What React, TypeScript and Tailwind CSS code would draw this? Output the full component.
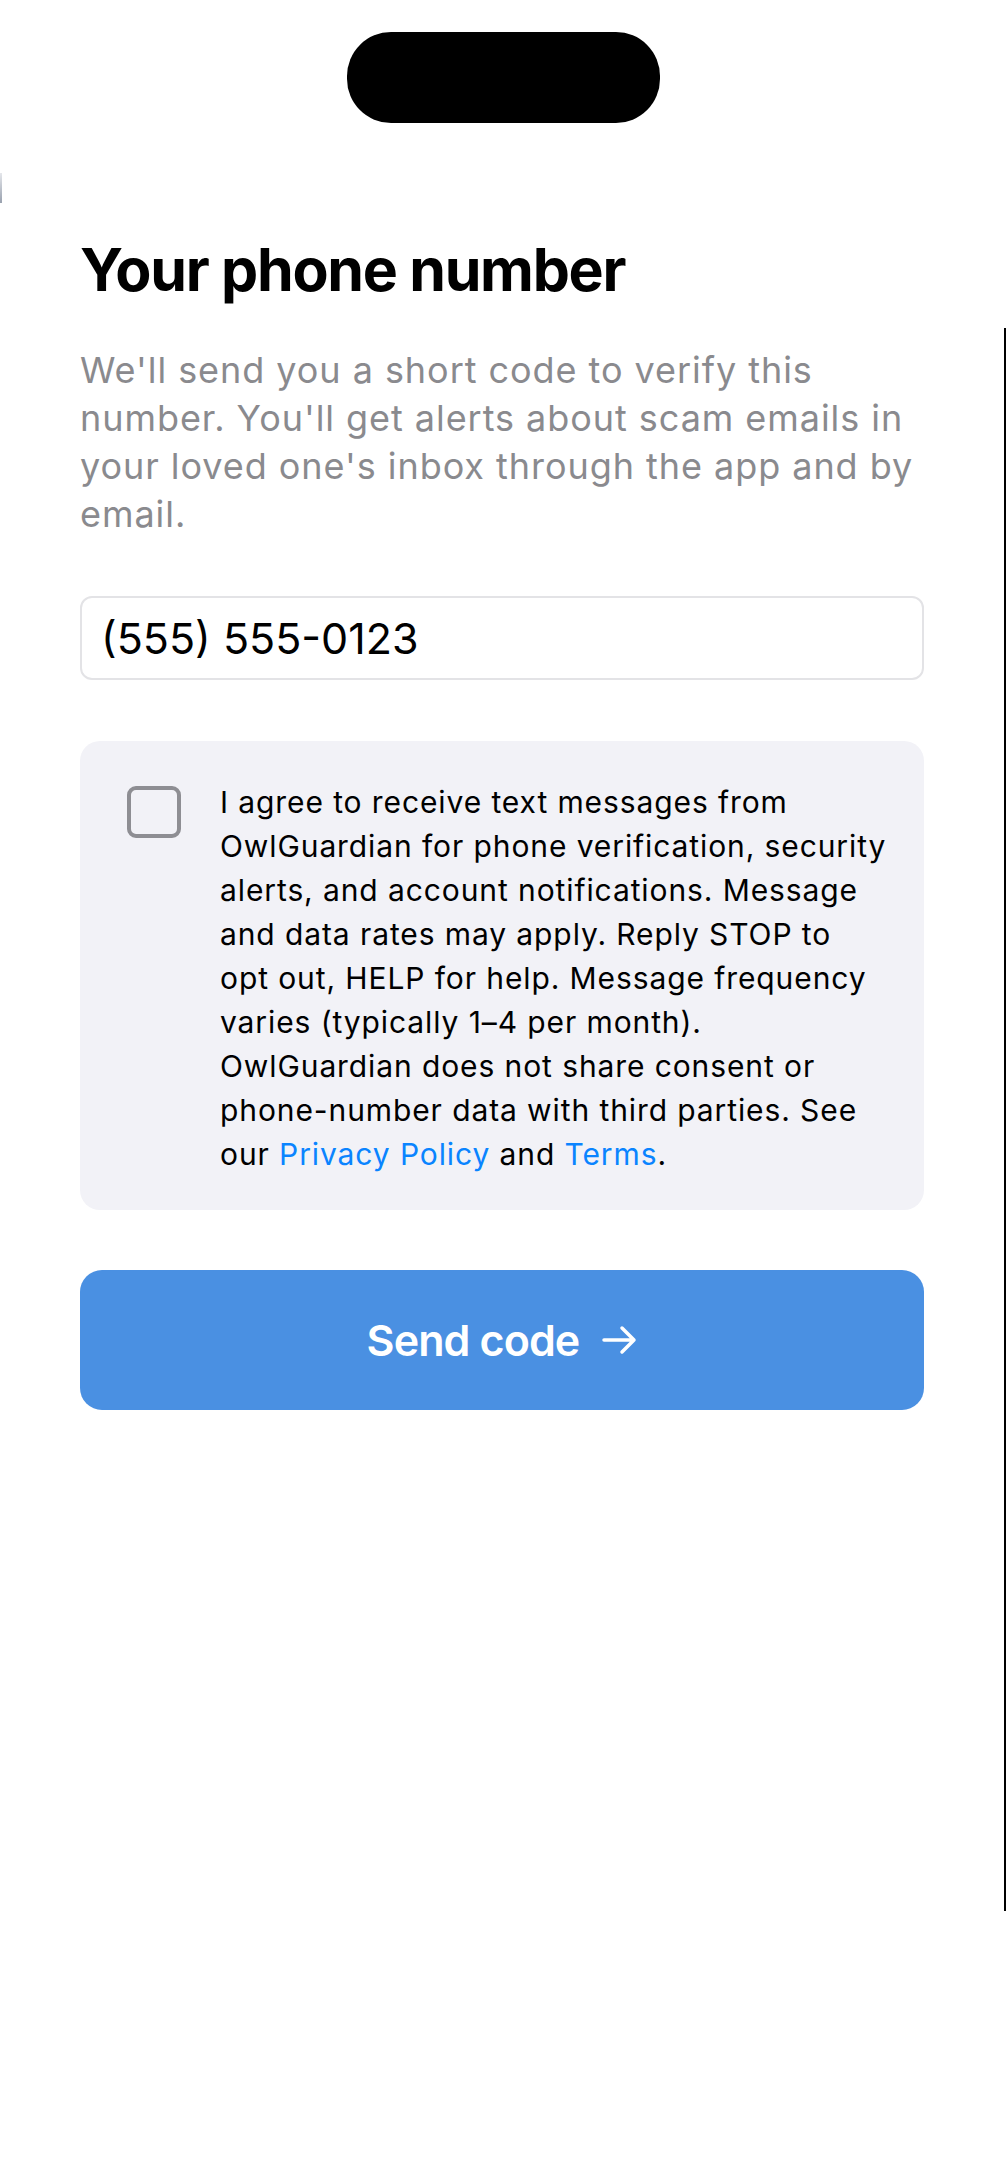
import { useState } from "react";

const ArrowIcon = () => (
  <svg width="36" height="30" viewBox="0 0 36 30" fill="none" className="shrink-0">
    <path
      d="M3 15H33M21 3L33 15L21 27"
      stroke="white"
      strokeWidth="3.5"
      strokeLinecap="round"
      strokeLinejoin="round"
    />
  </svg>
);

export default function App() {
  const [phone, setPhone] = useState("(555) 555-0123");
  const [agreed, setAgreed] = useState(false);

  return (
    <div
      className="relative min-h-[2182px] bg-white text-black"
      style={{ fontFamily: "Inter, 'Noto Sans', sans-serif" }}
    >
      {/* device island */}
      <div className="flex justify-center pt-[32px]">
        <div className="h-[91px] w-[313px] rounded-[44px] bg-black" />
      </div>

      <div className="absolute left-0 top-[173px] h-[30px] w-[2px] bg-gradient-to-b from-gray-200 to-gray-400" />
      <div className="absolute right-0 top-[328px] h-[1583px] w-[2px] bg-black" />

      <main className="pl-[80px] pr-[82px] pt-[111px]">
        <h1 className="text-[59px] font-bold leading-[72px] tracking-[-1.3px]">Your phone number</h1>

        <p className="mt-[40px] text-[36px] leading-[48px] tracking-[0.95px] text-[#8a8a8e]">
          We'll send you a short code to verify this number. You'll get alerts about scam emails in
          your loved one's inbox through the app and by email.
        </p>

        <div className="mt-[58px] flex h-[84px] items-center rounded-[12px] border-2 border-[#e3e3e6] bg-white pl-[19px]">
          <input
            value={phone}
            onChange={(e) => setPhone(e.target.value)}
            className="w-full bg-transparent text-[43px] text-black outline-none"
          />
        </div>

        <div className="mt-[61px] flex items-start rounded-[20px] bg-[#f2f2f7] pb-[34px] pl-[47px] pr-[36px] pt-[39px]">
          <button
            onClick={() => setAgreed(!agreed)}
            className="mt-[6px] h-[52px] w-[54px] shrink-0 rounded-[9px] border-4 border-[#8e8e93] bg-transparent"
          />
          <p className="ml-[39px] text-[30px] leading-[44px] tracking-[0.9px] text-black">
            I agree to receive text messages from OwlGuardian for phone verification, security alerts,
            and account notifications. Message and data rates may apply. Reply STOP to opt out, HELP
            for help. Message frequency varies (typically 1–4 per month). OwlGuardian does not share
            consent or phone-number data with third parties. See our{" "}
            <a className="text-[#0a84ff]">Privacy Policy</a> and <a className="text-[#0a84ff]">Terms</a>.
          </p>
        </div>

        <button className="mt-[60px] flex h-[140px] w-full items-center justify-center gap-[22px] rounded-[22px] bg-[#4a90e2] text-[43px] font-semibold tracking-[-0.9px] text-white">
          <span>Send code</span>
          <ArrowIcon />
        </button>
      </main>
    </div>
  );
}
